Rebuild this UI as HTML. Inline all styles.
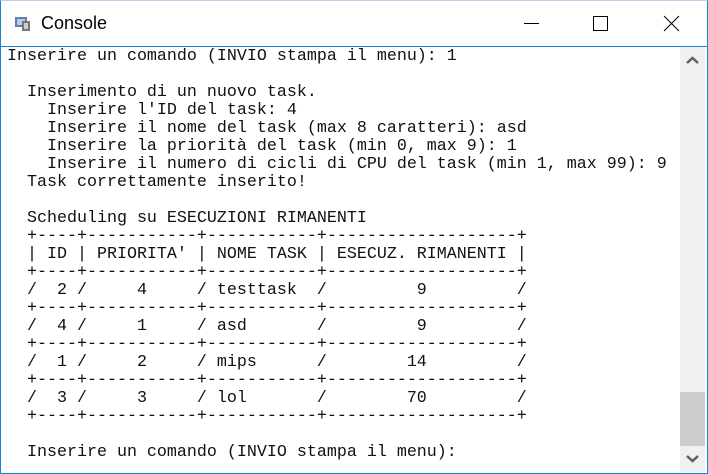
<!DOCTYPE html>
<html><head><meta charset="utf-8"><style>
html,body{margin:0;padding:0;background:#fff;}
body{width:708px;height:474px;position:relative;overflow:hidden;}
.frame{position:absolute;left:0;top:0;width:706px;height:472px;border:1px solid #1883d7;border-top-color:#b9d1ea;}
.title{position:absolute;left:41px;top:13px;font:18px "Liberation Sans",sans-serif;color:#000;}
.sep{position:absolute;left:1px;top:46px;width:706px;height:1px;background:#1883d7;}
pre{position:absolute;left:7px;top:48px;margin:0;font:16.67px/18px "Liberation Mono",monospace;color:#111;}
.sb{position:absolute;left:680px;top:47px;width:25px;height:425px;background:#f0f0f0;}
.thumb{position:absolute;left:680px;top:392px;width:25px;height:54px;background:#cdcdcd;}
</style></head><body>
<div class="frame"></div>
<svg style="position:absolute;left:14px;top:15px" width="18" height="18" viewBox="0 0 18 18">
<rect x="1" y="2" width="12" height="10" fill="#5a7fbf"/><rect x="3" y="4" width="8" height="6" fill="#bcd"/>
<rect x="8" y="6" width="8" height="10" fill="#777"/><rect x="10" y="8" width="4" height="6" fill="#ccc"/></svg>
<div class="title">Console</div>
<svg style="position:absolute;left:520px;top:14px" width="180" height="20">
<line x1="4" y1="9.5" x2="19" y2="9.5" stroke="#000"/>
<rect x="73.5" y="2.5" width="14" height="14" fill="none" stroke="#000"/>
<path d="M144 2 L159 17 M159 2 L144 17" stroke="#000"/>
</svg>
<div class="sep"></div>
<pre>Inserire un comando (INVIO stampa il menu): 1

  Inserimento di un nuovo task.
    Inserire l'ID del task: 4
    Inserire il nome del task (max 8 caratteri): asd
    Inserire la priorità del task (min 0, max 9): 1
    Inserire il numero di cicli di CPU del task (min 1, max 99): 9
  Task correttamente inserito!

  Scheduling su ESECUZIONI RIMANENTI
  +----+-----------+-----------+-------------------+
  | ID | PRIORITA' | NOME TASK | ESECUZ. RIMANENTI |
  +----+-----------+-----------+-------------------+
  /  2 /     4     / testtask  /         9         /
  +----+-----------+-----------+-------------------+
  /  4 /     1     / asd       /         9         /
  +----+-----------+-----------+-------------------+
  /  1 /     2     / mips      /        14         /
  +----+-----------+-----------+-------------------+
  /  3 /     3     / lol       /        70         /
  +----+-----------+-----------+-------------------+

  Inserire un comando (INVIO stampa il menu):</pre>
<div class="sb"></div>
<div class="thumb"></div>
<svg style="position:absolute;left:686px;top:56px" width="13" height="9"><path d="M1 7 L6.5 2 L12 7" fill="none" stroke="#606060" stroke-width="2.5"/></svg>
<svg style="position:absolute;left:686px;top:454px" width="13" height="9"><path d="M1 2 L6.5 7 L12 2" fill="none" stroke="#606060" stroke-width="2.5"/></svg>
</body></html>
